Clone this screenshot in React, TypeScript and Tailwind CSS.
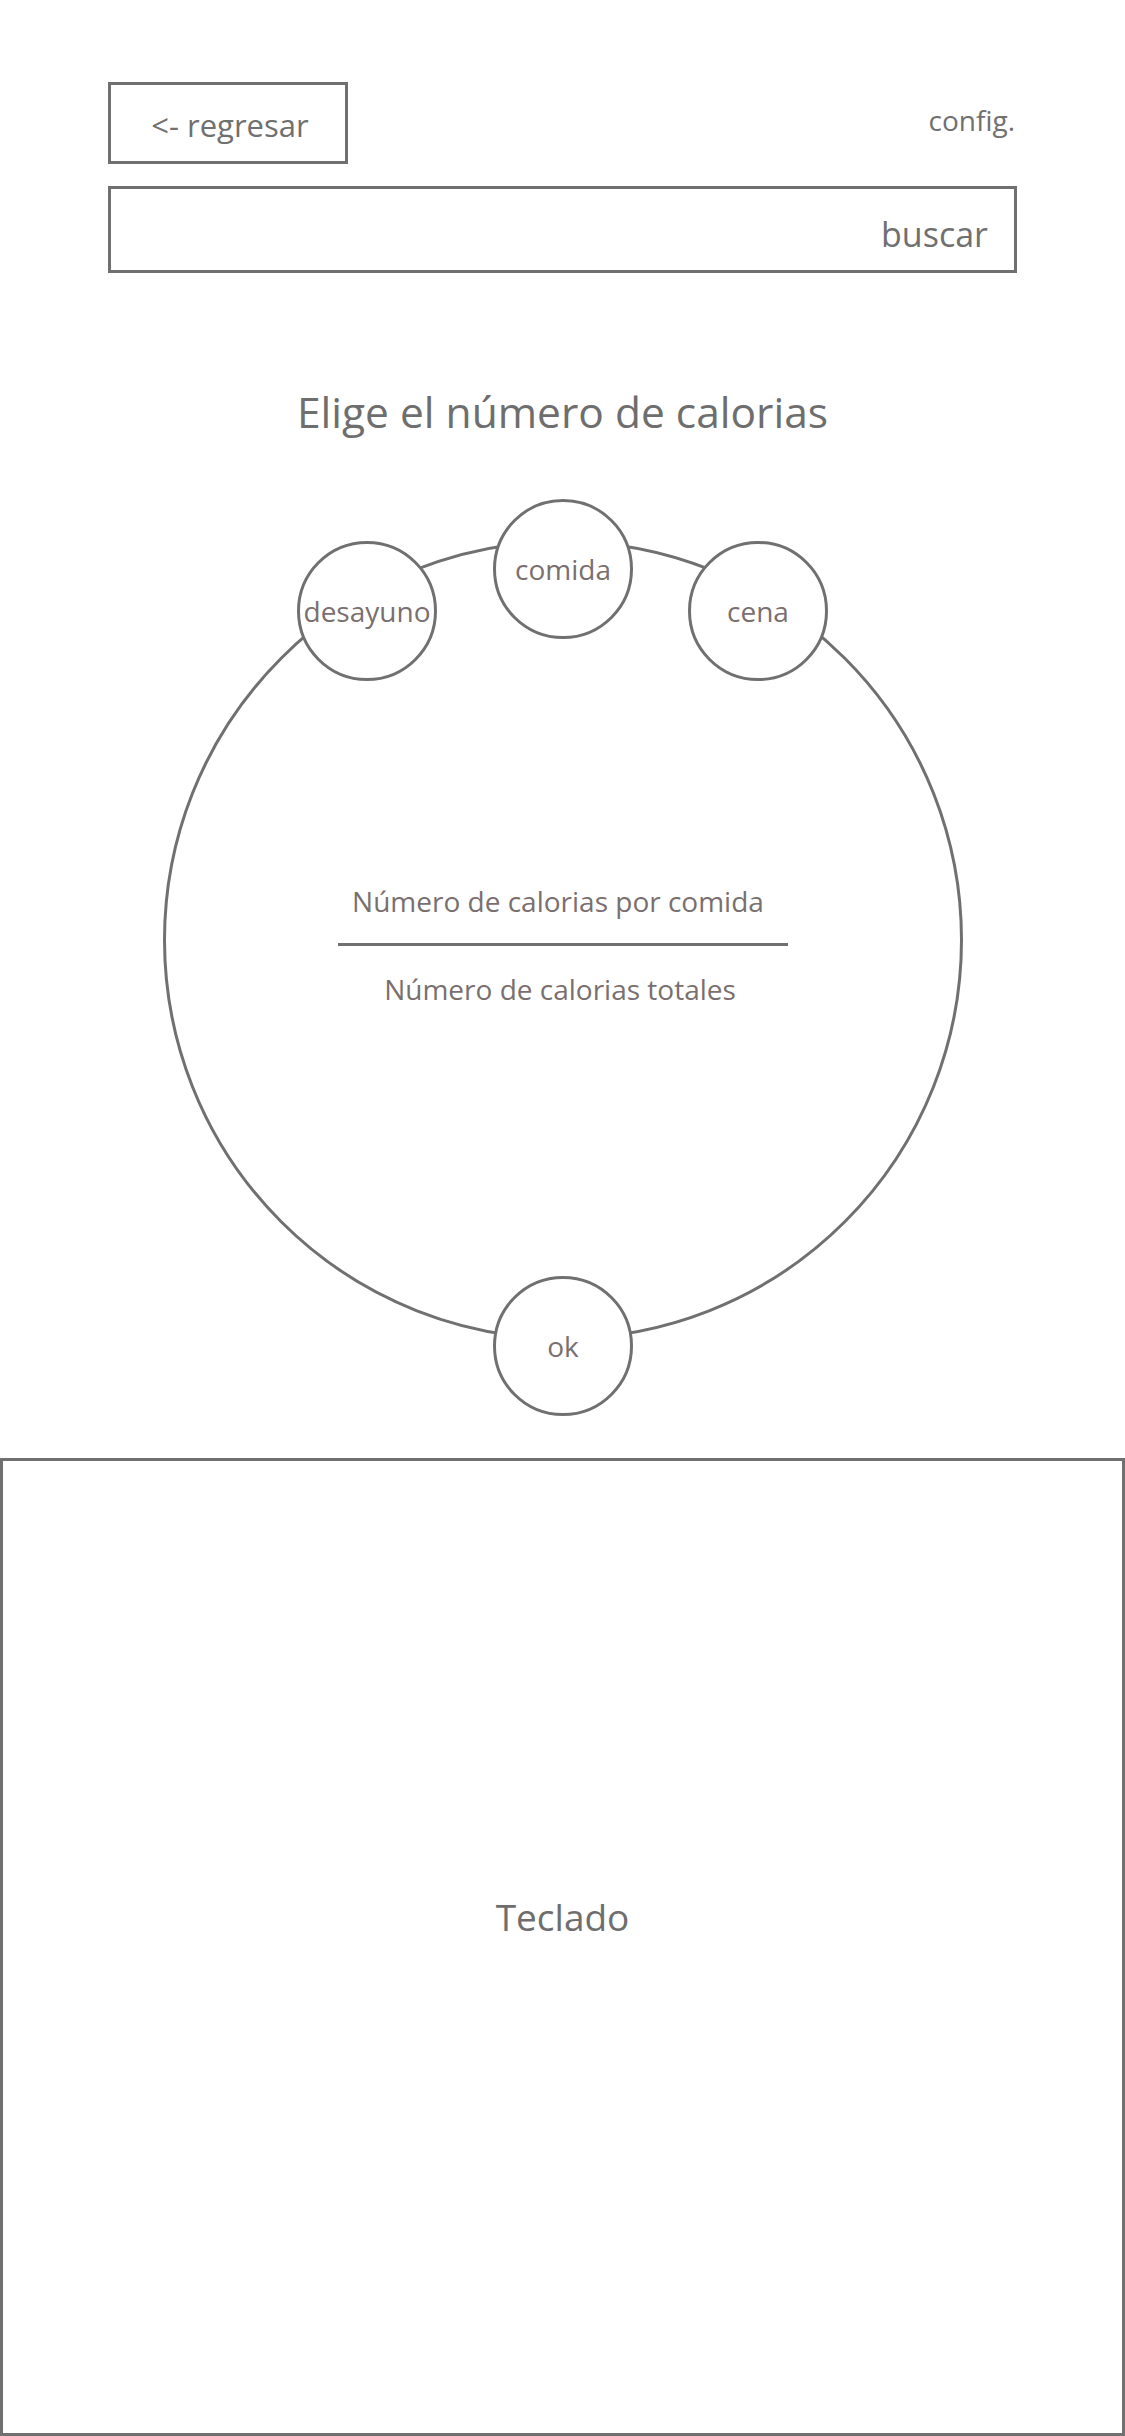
import React from "react";

const font = { fontFamily: '"Open Sans", "Noto Sans", sans-serif' };

function SmallCircle({ label, className }: { label: string; className: string }) {
  return (
    <div
      className={`absolute w-[140px] h-[140px] rounded-full border-[3px] border-[#707070] bg-white flex items-center justify-center text-[28px] leading-[28px] text-[#7a6f6f] ${className}`}
    >
      {label}
    </div>
  );
}

export default function App() {
  return (
    <div className="w-[1125px] h-[2436px] bg-white flex flex-col overflow-hidden" style={font}>
      <div className="px-[108px] pt-[82px] flex flex-col">
        <div className="flex justify-between items-start">
          <button className="w-[240px] h-[82px] border-[3px] border-[#707070] flex items-center justify-center pt-[4px] pl-[4px] text-[31px] leading-[31px] text-[#707070]">
            &lt;- regresar
          </button>
          <span className="mt-[19px] mr-[2px] text-[28px] leading-[38px] text-[#707070]">config.</span>
        </div>
        <div className="mt-[22px] h-[87px] border-[3px] border-[#707070] flex items-center justify-end pr-[26px] pt-[9px] text-[34px] leading-[34px] text-[#707070]">
          buscar
        </div>
      </div>

      <h1 className="mt-[118px] text-center text-[42.5px] leading-[42px] text-[#6e6e6e] font-normal">
        Elige el número de calorias
      </h1>

      <div className="relative ml-[163px] mt-[107px] w-[800px] h-[800px]">
        <div className="w-full h-full rounded-full border-[3px] border-[#707070] flex items-center justify-center">
          <div className="flex flex-col items-center pt-[9px] text-[28px] leading-[28px] text-[#7a6f6f]">
            <span className="-ml-[10px]">Número de calorias por comida</span>
            <div className="mt-[28px] w-[450px] h-[3px] bg-[#707070]" />
            <span className="mt-[29px] -ml-[6px]">Número de calorias totales</span>
          </div>
        </div>
        <SmallCircle label="desayuno" className="left-[134px] top-[1px]" />
        <SmallCircle label="comida" className="left-[330px] -top-[41px]" />
        <SmallCircle label="cena" className="left-[525px] top-[1px]" />
        <SmallCircle label="ok" className="left-[330px] top-[736px]" />
      </div>

      <div className="mt-[118px] w-[1125px] h-[978px] border-[3px] border-[#707070] flex items-center justify-center pb-[62px] text-[37px] leading-[37px] text-[#6e6e6e]">
        Teclado
      </div>
    </div>
  );
}
